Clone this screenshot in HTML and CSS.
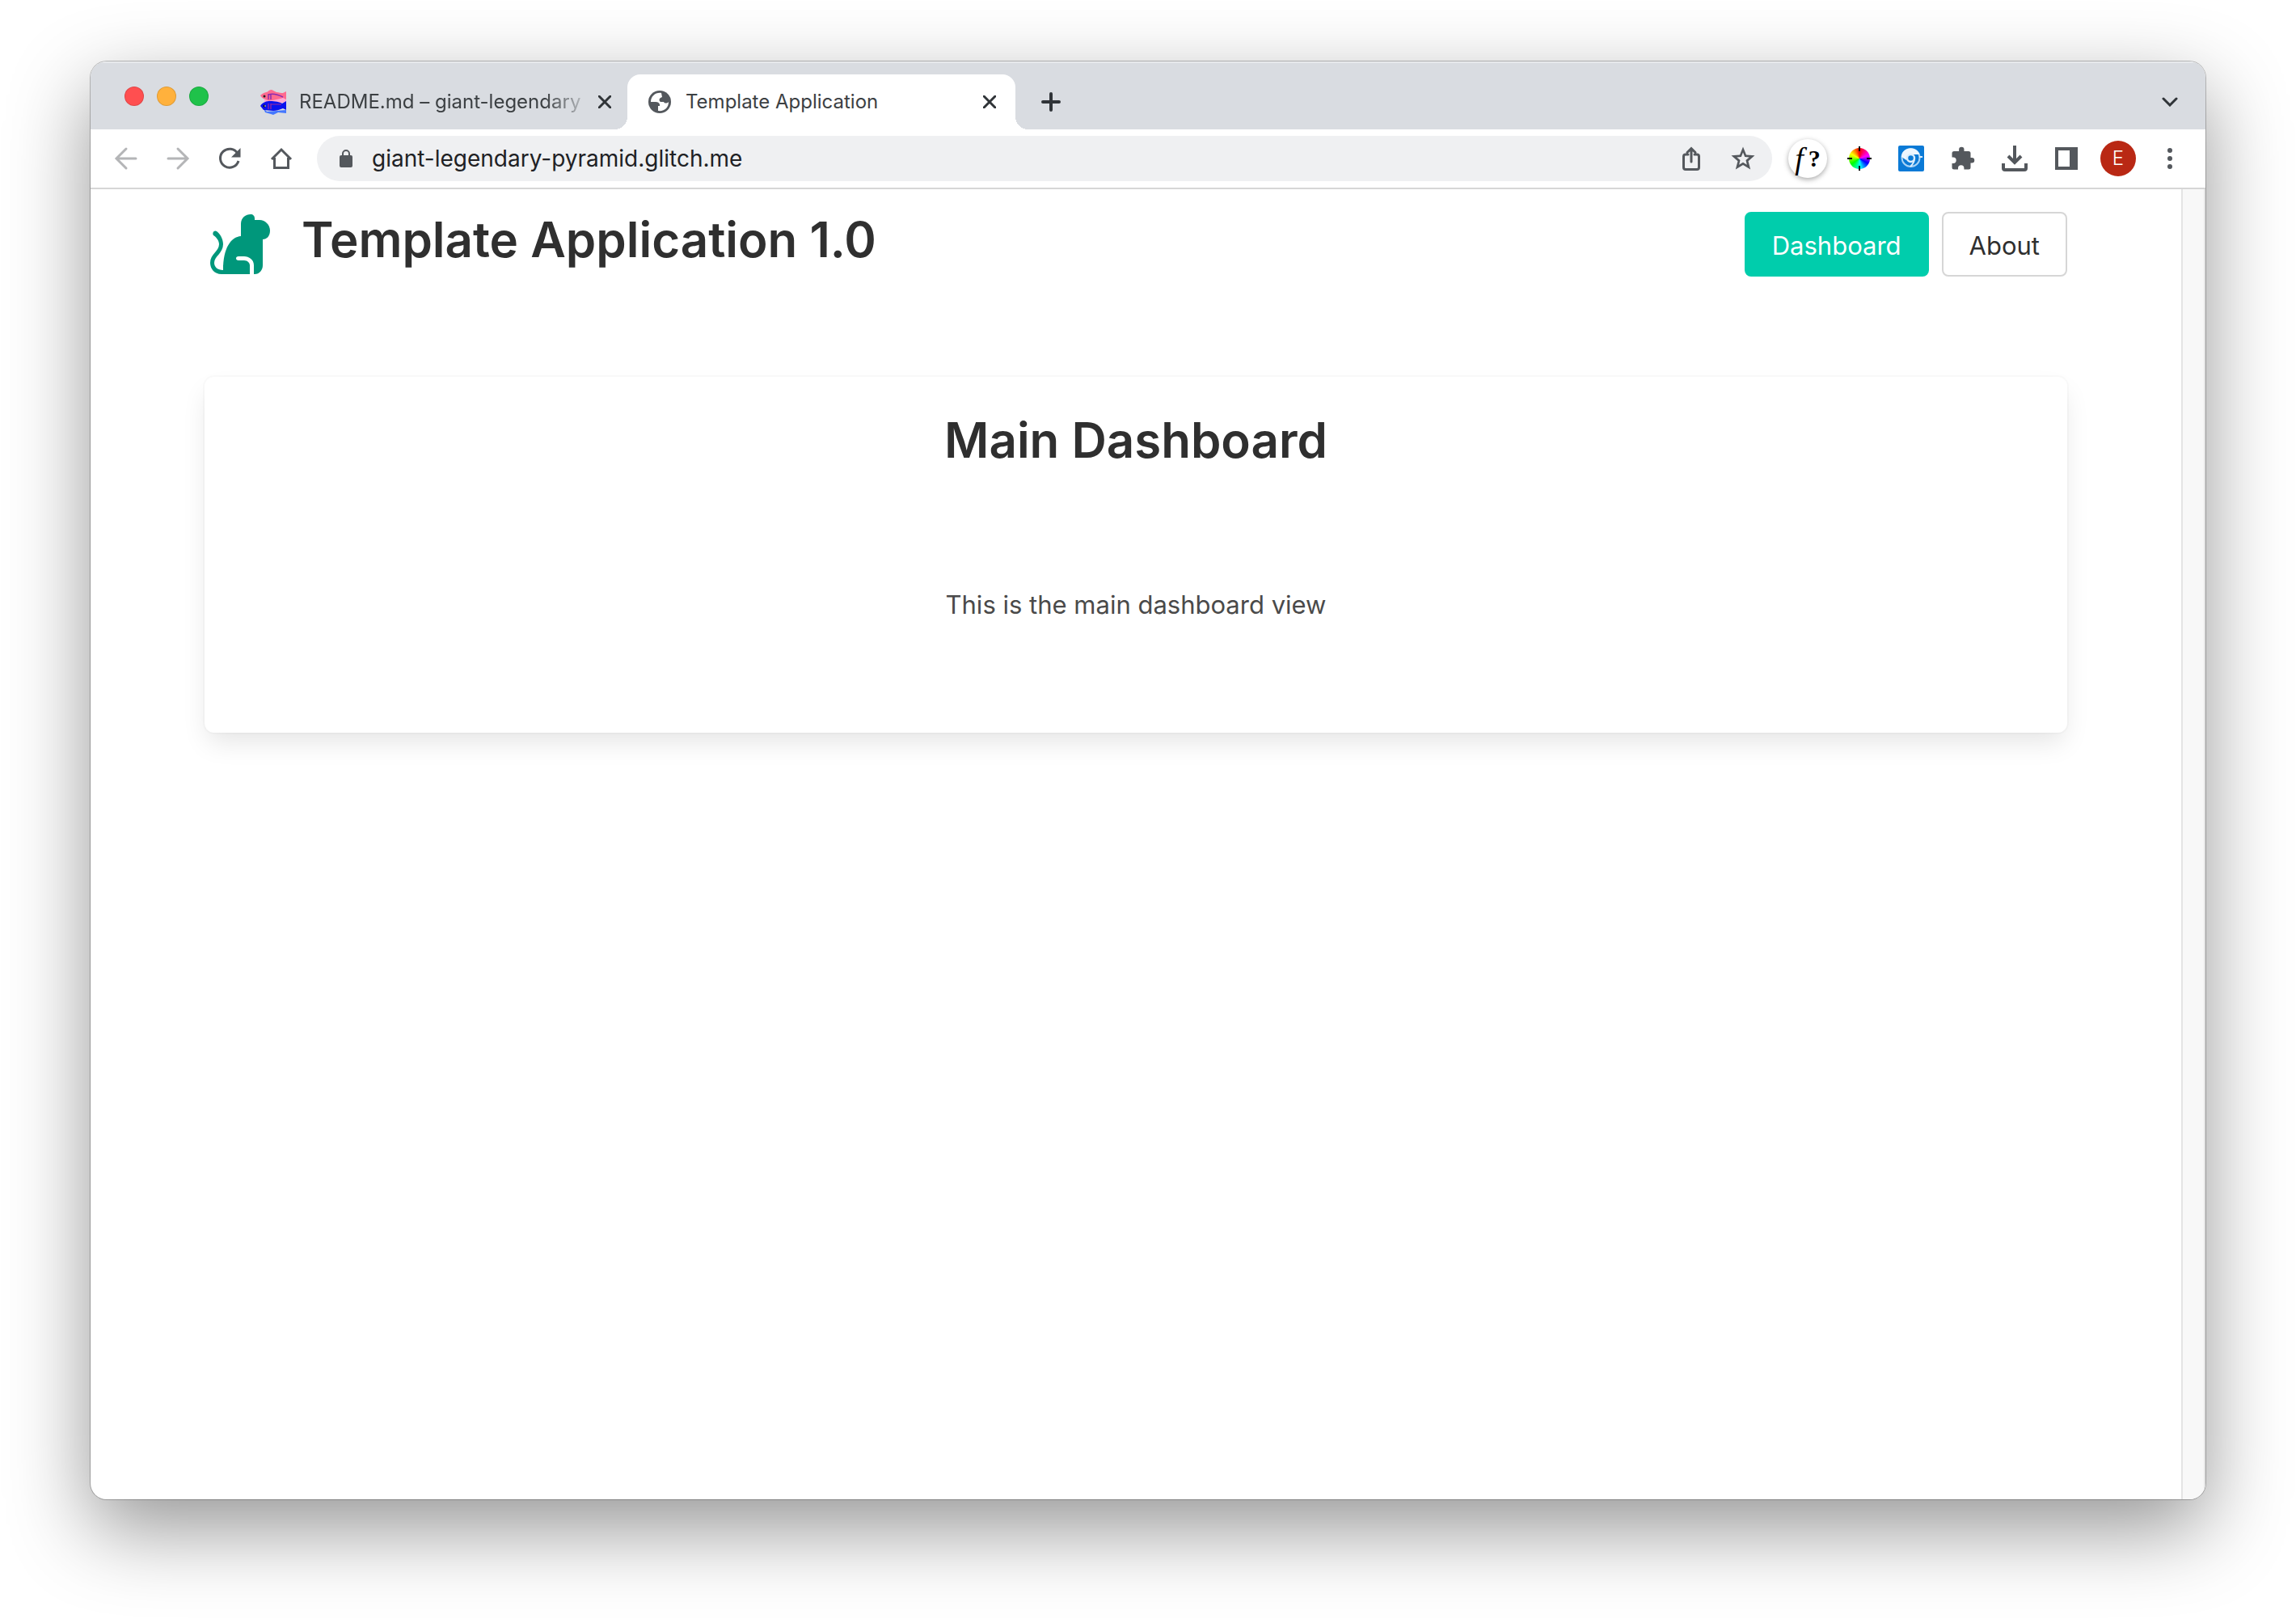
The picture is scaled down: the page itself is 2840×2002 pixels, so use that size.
FILE: index.html
```html
<!DOCTYPE html>
<html lang="en">
<head>
<meta charset="utf-8">
<title>Template Application</title>
<link rel="stylesheet" href="styles.css">
</head>
<body>
<div class="window">
  <div class="tabstrip">
    <div class="lights">
      <button class="light light-close" aria-label="Close window"></button>
      <button class="light light-min" aria-label="Minimize window"></button>
      <button class="light light-max" aria-label="Zoom window"></button>
    </div>
    <div class="tab tab-first">
      <svg class="fav" viewBox="0 0 32 32">
        <path d="M5 10H32V17H5Z" fill="#ffa9d6"/>
        <path d="M0 8C3 5 7 4 9 3.500C11 1 14 0 16 2L20 4C23 4.500 26 5 28 5L32 3V13L28 11C22 13 15 14 11 14.500C6 13 2 12 0 8Z" fill="#ff6b8f"/>
        <path d="M4 24 8 28 32 26V30L22 29 16 32 13 31 6 29Z" fill="#4477ff"/>
        <path d="M0 21C3 16 8 15 12 15C18 15 24 16 27 18L32 15V26L28 24C23 26 20 27 16 27L4 26Z" fill="#0a12ee"/>
        <path d="M10 7C16 5 22 7 28 10M10 6V13M13 6V13" stroke="#8a2bb0" stroke-width="1.500" fill="none"/>
        <path d="M10 18V25M13 18V25M13 19H26" stroke="#a02a98" stroke-width="1.200" fill="none"/>
        <circle cx="5" cy="9" r="1.500" fill="#222"/><circle cx="5" cy="21" r="1.500" fill="#111"/><path d="M6 20V22" stroke="#cde"/>
      </svg>
      <span class="tab-title tab-title-fade">README.md – giant-legendary</span>
      <button class="close" aria-label="Close tab"><svg viewBox="0 0 16 16"><path d="M1 1 15 15M15 1 1 15"/></svg></button>
    </div>
    <div class="tab tab-active">
      <svg class="fav" viewBox="0 0 32 32">
        <circle cx="16" cy="16" r="14" fill="#54585d"/>
        <path d="M18 5C11 4 5 9 5 16h6c3 0 4 1 5 3v2h-2v6c8 1 13-4 13-11-2 2-5 2-6 0h-4c-2-1-2-4 0-5l2-1z" fill="#fff"/>
      </svg>
      <span class="tab-title">Template Application</span>
      <button class="close" aria-label="Close tab"><svg viewBox="0 0 16 16"><path d="M1 1 15 15M15 1 1 15"/></svg></button>
    </div>
    <button class="newtab" aria-label="New tab"><svg viewBox="0 0 24 24"><path d="M12 2V22M2 12H22"/></svg></button>
    <button class="tabsearch" aria-label="Search tabs"><svg viewBox="0 0 20 12"><path d="M2 2 10 10 18 2"/></svg></button>
  </div>

  <div class="toolbar">
    <button class="tool tool-off" aria-label="Back"><svg class="line" viewBox="0 0 32 32"><path d="M28 16H5M16 4 4 16 16 28"/></svg></button>
    <button class="tool tool-off" aria-label="Forward"><svg class="line" viewBox="0 0 32 32"><path d="M4 16H27M16 4 28 16 16 28"/></svg></button>
    <button class="tool" aria-label="Reload"><svg class="line line-thick" viewBox="0 0 32 32"><path d="M26 10A11.500 11.500 0 1 0 27 19"/><path d="M29.500 3V14.500H18Z" fill="currentColor" stroke="none"/></svg></button>
    <button class="tool" aria-label="Home"><svg class="line line-thick" viewBox="0 0 32 32"><path d="M4 17 16 5 28 17M7.500 15V27.500H24.500V15"/></svg></button>
    <div class="omnibox">
      <svg class="lock" viewBox="0 0 16 22"><rect y="7" width="16" height="15" rx="2" fill="#54585d"/><path d="M4 8V5a4 4 0 0 1 8 0V8" fill="none" stroke="#54585d" stroke-width="2"/></svg>
      <input class="url" type="text" aria-label="Address" value="giant-legendary-pyramid.glitch.me">
      <button class="tool" aria-label="Share"><svg class="line" viewBox="0 0 32 32"><path d="M12 11H9a2.500 2.500 0 0 0-2.500 2.500V27A2.500 2.500 0 0 0 9 29.500H23A2.500 2.500 0 0 0 25.500 27V13.500A2.500 2.500 0 0 0 23 11H20M16 20V4M11 8.500 16 3.500 21 8.500"/></svg></button>
      <button class="tool" aria-label="Bookmark"><svg viewBox="0 0 32 32"><path fill="currentColor" fill-rule="evenodd" d="M16 1.500 20 11.500 30.500 12.300 22.500 19.200 25.200 29.500 16 24 6.800 29.500 9.500 19.200 1.500 12.300 12 11.500ZM16 8.500 13.800 14 8.300 14.500 12.500 18 11.200 23.700 16 20.700 20.800 23.700 19.500 18 23.700 14.500 18.200 14Z"/></svg></button>
    </div>
    <button class="tool" aria-label="Font finder"><span class="disc"><i>f</i><b>?</b></span></button>
    <button class="tool" aria-label="Color picker"><span class="wheel"></span></button>
    <button class="tool" aria-label="Browser tools"><svg viewBox="0 0 32 32"><rect width="32" height="32" rx="2" fill="#0b7ad6"/><circle cx="15.500" cy="15" r="11" fill="none" stroke="#a9d4f6" stroke-width="2"/><path d="M4 14C4 8 9 3.500 15.500 3.500C21 3.500 25 7 26.500 11H17C12 10 10 14 10 18Z" fill="#eef6fd"/><circle cx="15.500" cy="15.500" r="4.500" fill="#0b7ad6" stroke="#dceefc" stroke-width="2.500"/><path d="M20 16C20 20 18 23 15 26M26 14H30" fill="none" stroke="#dceefc" stroke-width="2"/></svg></button>
    <button class="tool" aria-label="Extensions"><svg viewBox="0 0 32 32"><path fill="currentColor" d="M27 15h-1.500V9.500A2.500 2.500 0 0 0 23 7h-5.500V5a3.200 3.200 0 0 0-6.400 0V7H5a2.500 2.500 0 0 0-2.500 2.500v5H4a3.700 3.700 0 0 1 0 7.400H2.500V27A2.500 2.500 0 0 0 5 29.500H10V28a3.700 3.700 0 0 1 7.400 0v1.500H23A2.500 2.500 0 0 0 25.500 27V21.500H27A3.200 3.200 0 0 0 27 15Z"/></svg></button>
    <button class="tool" aria-label="Downloads"><svg class="line line-bold" viewBox="0 0 32 32"><path d="M16 0V20M8 13 16 21 24 13M2 22V28A2 2 0 0 0 4 30H28A2 2 0 0 0 30 28V22"/></svg></button>
    <button class="tool" aria-label="Side panel"><svg viewBox="0 0 32 32"><path fill="currentColor" fill-rule="evenodd" d="M2 2H30V30H2ZM6 6V26H20V6Z"/></svg></button>
    <button class="tool" aria-label="Profile"><span class="avatar">E</span></button>
    <button class="tool" aria-label="Menu"><svg viewBox="0 0 32 32"><g fill="currentColor"><circle cx="16" cy="6" r="3"/><circle cx="16" cy="16" r="3"/><circle cx="16" cy="26" r="3"/></g></svg></button>
  </div>

  <div class="viewport">
    <main class="page">
      <header class="app-header">
        <svg class="logo" viewBox="0 0 76 76">
          <path fill="#00977b" d="M39 13C39 5 45 1 51 1C54 1 56 3 56 6V8H62C69 8 75 14 75 21C75 28 71 32 66 32V64C66 70 62 75 56 75H55V64C55 57 49 53 43 53H36C32 53 32 58 36 58H43C47 58 50 61 50 64V75H15C6 75 1 68 1 61C1 50 12 47 12 38C12 33 8 29 5 27C3 24 6 20 9 22C13 25 17 31 17 38C17 49 6 53 6 61C6 66 10 70 17 70C17 42 27 29 39 28Z"/>
        </svg>
        <h1 class="app-title">Template Application 1.0</h1>
        <nav class="nav">
          <a class="btn btn-primary" href="#dashboard">Dashboard</a>
          <a class="btn" href="#about">About</a>
        </nav>
      </header>
      <section class="box" id="dashboard">
        <h2 class="box-title">Main Dashboard</h2>
        <p class="box-text">This is the main dashboard view</p>
      </section>
    </main>
    <div class="scrollbar"></div>
  </div>
</div>
</body>
</html>
```
FILE: styles.css
```css
* { box-sizing: border-box; }

body {
  margin: 0;
  min-height: 100vh;
  padding: 76px 112px 148px;
  display: flex;
  background: #fff;
  font-family: Inter, "Liberation Sans", sans-serif;
  color: #4a4a4a;
}

button {
  border: 0;
  padding: 0;
  background: none;
  color: inherit;
  font: inherit;
}

svg { display: block; flex: none; }

.window {
  flex: 1;
  min-width: 0;
  display: flex;
  flex-direction: column;
  border-radius: 20px;
  overflow: hidden;
  background: #fff;
  box-shadow: 0 0 0 1px rgba(0, 0, 0, .24), 0 36px 100px rgba(0, 0, 0, .42);
}

/* Tab strip */
.tabstrip {
  height: 84px;
  padding: 16px 28px 0 42px;
  display: flex;
  background: #d9dce1;
  box-shadow: inset 0 2px 0 #e7e9ec;
}

.lights { display: flex; gap: 16px; padding-top: 15px; }

.light {
  width: 24px;
  height: 24px;
  border: 1px solid rgba(0, 0, 0, .12);
  border-radius: 50%;
}
.light-close { background: #ff4f50; }
.light-min { background: #ffb13c; }
.light-max { background: #1fc24a; }

.tab {
  width: 480px;
  height: 68px;
  padding: 0 20px 0 24px;
  display: flex;
  align-items: center;
  gap: 16px;
  color: #3c4043;
}
.tab-first { width: 478px; margin-left: 40px; padding-right: 16px; gap: 14px; }

.tab-active {
  position: relative;
  background: #fff;
  border-radius: 16px 16px 0 0;
}
.tab-active::before,
.tab-active::after {
  content: "";
  position: absolute;
  bottom: 0;
  width: 16px;
  height: 16px;
}
.tab-active::before {
  right: 100%;
  background: radial-gradient(circle at 0 0, transparent 16px, #fff 16px);
}
.tab-active::after {
  left: 100%;
  background: radial-gradient(circle at 100% 0, transparent 16px, #fff 16px);
}

.fav { width: 32px; height: 32px; }

.tab-title {
  flex: 1;
  white-space: nowrap;
  font-size: 24px;
  line-height: 32px;
}
.tab-title-fade {
  padding-left: 2px;
  mask-image: linear-gradient(to right, #000 calc(100% - 48px), rgba(0, 0, 0, .2));
}

.close { width: 24px; height: 24px; padding: 4px; }
.close svg, .newtab svg, .tabsearch svg {
  fill: none;
  stroke: #303438;
  stroke-width: 3;
  stroke-linecap: round;
}
.close svg { width: 16px; height: 16px; }
.newtab { width: 56px; height: 68px; margin-left: 16px; }
.newtab svg { width: 24px; margin: auto; stroke-width: 4; }
.tabsearch { width: 32px; height: 68px; margin-left: auto; }
.tabsearch svg { width: 20px; margin: auto; stroke-width: 3; }

/* Toolbar */
.toolbar {
  height: 74px;
  padding: 0 12px;
  display: flex;
  align-items: center;
  border-bottom: 2px solid #d6d6d6;
  color: #54585d;
}

.tool {
  width: 64px;
  height: 56px;
  flex: none;
  display: flex;
  align-items: center;
  justify-content: center;
}
.tool svg { width: 32px; height: 32px; }
.tool-off { color: #b4b5b7; }

.line {
  fill: none;
  stroke: currentColor;
  stroke-width: 3;
  stroke-linecap: round;
}
.line-thick { stroke-linecap: butt; }
.line-bold { stroke-width: 4; stroke-linecap: butt; }

.omnibox {
  flex: 1;
  height: 56px;
  margin: 0 12px;
  padding: 0 4px 0 28px;
  display: flex;
  align-items: center;
  border-radius: 28px;
  background: #eff0f2;
}
.lock { width: 16px; height: 22px; }
.url {
  flex: 1;
  min-width: 0;
  height: 56px;
  margin-left: 24px;
  padding: 0;
  border: 0;
  outline: 0;
  background: none;
  font: 28px/36px Inter, "Liberation Sans", sans-serif;
  color: #202124;
}

.disc {
  width: 48px;
  height: 48px;
  display: flex;
  align-items: center;
  justify-content: center;
  gap: 6px;
  border-radius: 50%;
  background: #fff;
  box-shadow: 0 2px 6px rgba(0, 0, 0, .35);
  font: 38px/40px "Liberation Serif", serif;
  color: #000;
}
.disc b { font-size: 30px; }

.wheel {
  position: relative;
  width: 26px;
  height: 26px;
  border-radius: 50%;
  background: conic-gradient(#f00, #f0f 70deg, #00f 120deg, #0ff 175deg, #0f0 235deg, #ff0 300deg, #f00);
}
.wheel::before,
.wheel::after {
  content: "";
  position: absolute;
  background: linear-gradient(90deg, #000 6px, transparent 6px 24px, #000 24px);
  left: -2px;
  top: 12px;
  width: 30px;
  height: 2px;
}
.wheel::after { transform: rotate(90deg); }

.avatar {
  width: 44px;
  height: 44px;
  border-radius: 50%;
  background: #b92814;
  color: #fff;
  font-size: 24px;
  font-weight: 300;
  line-height: 44px;
  text-align: center;
}

/* Page content */
.viewport { flex: 1; display: flex; }

.page { flex: 1; min-width: 0; padding: 28px 141px; }

.scrollbar {
  width: 30px;
  border: solid #e4e4e4;
  border-width: 0 2px;
  background: #f8f8f8;
}

.app-header { display: flex; align-items: flex-start; }

.logo { width: 76px; height: 76px; margin: 2px 6px 0; }

.app-title {
  margin: 0 0 0 32px;
  font-size: 60px;
  line-height: 68px;
  font-weight: 600;
  color: #2f2f2f;
}

.nav { margin-left: auto; display: flex; gap: 16px; }

.btn {
  height: 80px;
  padding: 2px 32px 0;
  border: 2px solid #d6d6d6;
  border-radius: 8px;
  background: #fff;
  color: #2f2f2f;
  font-size: 31px;
  line-height: 76px;
  text-decoration: none;
}
.btn-primary {
  border-color: #00cdac;
  background: #00cdac;
  color: #fff;
}

.box {
  min-height: 440px;
  margin-top: 124px;
  padding: 40px;
  border-radius: 12px;
  text-align: center;
  box-shadow: 0 16px 32px -4px rgba(10, 10, 10, .1), 0 0 0 2px rgba(10, 10, 10, .02);
}
.box-title {
  margin: 0;
  font-size: 60px;
  line-height: 76px;
  font-weight: 600;
  color: #2f2f2f;
}
.box-text {
  margin: 142px 0 0;
  font-size: 31px;
  line-height: 48px;
}
```
